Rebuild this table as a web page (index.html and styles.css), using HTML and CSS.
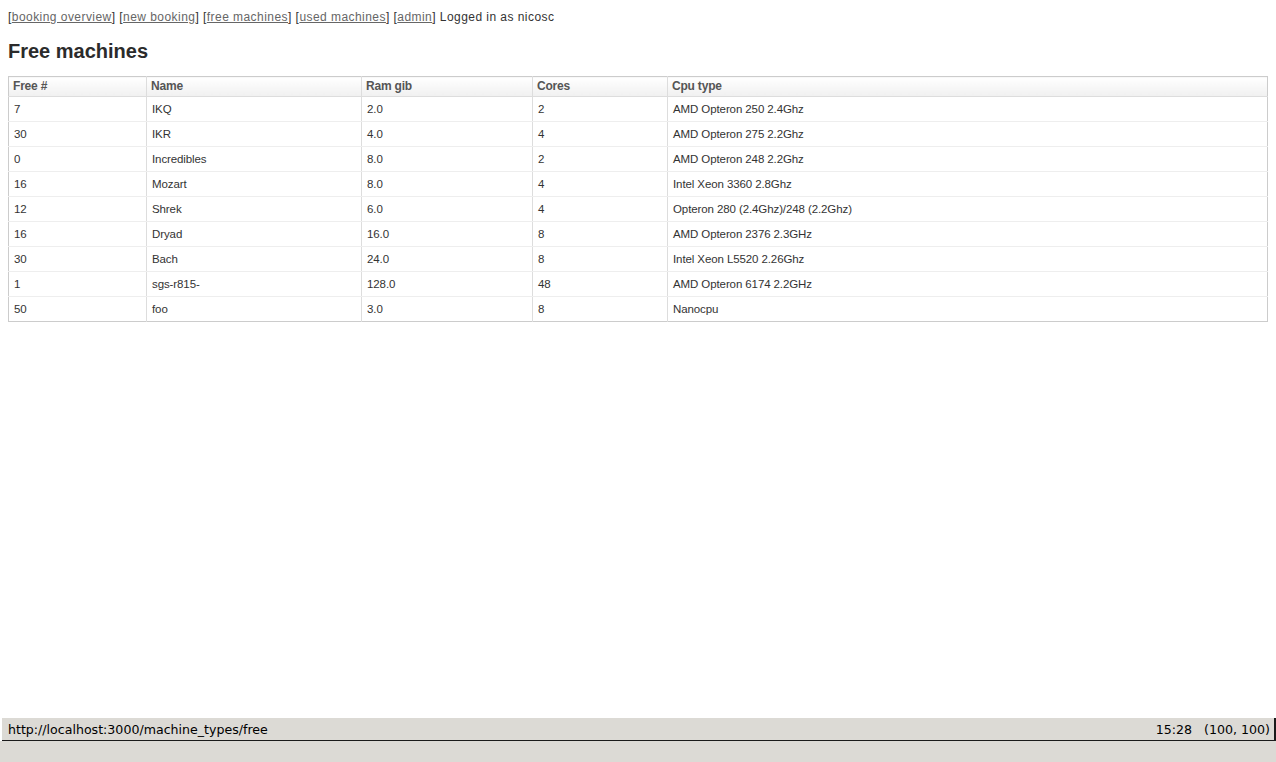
FILE: index.html
```html
<!DOCTYPE html>
<html>
<head>
<meta charset="utf-8">
<title>Free machines</title>
<link rel="stylesheet" href="styles.css">
</head>
<body>
<div class="page">
  <div class="content">
    <div class="nav">
      [<a href="#">booking overview</a>] [<a href="#">new booking</a>] [<a href="#">free machines</a>] [<a href="#">used machines</a>] [<a href="#">admin</a>] Logged in as nicosc
    </div>
    <h1 class="title">Free machines</h1>
    <table class="grid">
      <thead>
        <tr><th class="c1">Free #</th><th class="c2">Name</th><th class="c3">Ram gib</th><th class="c4">Cores</th><th>Cpu type</th></tr>
      </thead>
      <tbody>
        <tr><td>7</td><td>IKQ</td><td>2.0</td><td>2</td><td>AMD Opteron 250 2.4Ghz</td></tr>
        <tr><td>30</td><td>IKR</td><td>4.0</td><td>4</td><td>AMD Opteron 275 2.2Ghz</td></tr>
        <tr><td>0</td><td>Incredibles</td><td>8.0</td><td>2</td><td>AMD Opteron 248 2.2Ghz</td></tr>
        <tr><td>16</td><td>Mozart</td><td>8.0</td><td>4</td><td>Intel Xeon 3360 2.8Ghz</td></tr>
        <tr><td>12</td><td>Shrek</td><td>6.0</td><td>4</td><td>Opteron 280 (2.4Ghz)/248 (2.2Ghz)</td></tr>
        <tr><td>16</td><td>Dryad</td><td>16.0</td><td>8</td><td>AMD Opteron 2376 2.3GHz</td></tr>
        <tr><td>30</td><td>Bach</td><td>24.0</td><td>8</td><td>Intel Xeon L5520 2.26Ghz</td></tr>
        <tr><td>1</td><td>sgs-r815-</td><td>128.0</td><td>48</td><td>AMD Opteron 6174 2.2GHz</td></tr>
        <tr><td>50</td><td>foo</td><td>3.0</td><td>8</td><td>Nanocpu</td></tr>
      </tbody>
    </table>
  </div>
  <div class="statusbar">
    <span class="url">http://localhost:3000/machine_types/free</span>
    <span class="info">15:28 &nbsp;&nbsp;(100, 100)</span>
  </div>
  <div class="chrome"></div>
</div>
</body>
</html>
```

FILE: styles.css
```css
html, body {
  margin: 0;
  padding: 0;
  background: #ffffff;
}
.page {
  height: 762px;
  display: flex;
  flex-direction: column;
  overflow: hidden;
}
.content {
  flex: 1;
  padding: 10px 8px 0 8px;
  font-family: "Liberation Sans", Arial, sans-serif;
  font-size: 12px;
  color: #333333;
}
.nav {
  line-height: 15px;
  height: 15px;
  letter-spacing: 0.45px;
}
.nav a {
  color: #666666;
  text-decoration: underline;
}
.title {
  font-size: 20px;
  font-weight: bold;
  color: #2b2b2b;
  margin: 14px 0 0 0;
  line-height: 24px;
  height: 24px;
}
.grid {
  margin-top: 13px;
  width: 1260px;
  border-collapse: collapse;
  border: 1px solid #cccccc;
}
.grid th {
  text-align: left;
  font-weight: bold;
  font-size: 12px;
  letter-spacing: -0.2px;
  color: #555555;
  height: 18px;
  line-height: 14px;
  padding: 0 4px 1px 4px;
  background: linear-gradient(#ffffff, #f0f0f0);
  border-left: 1px solid #dddddd;
  border-bottom: 1px solid #dddddd;
  vertical-align: middle;
}
.grid td {
  height: 24px;
  padding: 0 5px;
  font-size: 11.5px;
  letter-spacing: -0.1px;
  border-left: 1px solid #dddddd;
  border-bottom: 1px solid #eeeeee;
  vertical-align: middle;
  color: #333333;
}
.grid tr > *:first-child {
  border-left: none;
}
.grid tbody tr:last-child td {
  border-bottom: none;
}
.c1 { width: 129px; }
.c2 { width: 206px; }
.c3 { width: 162px; }
.c4 { width: 126px; }
.statusbar {
  margin-left: 2px;
  height: 22px;
  background: #dcdad5;
  border-right: 2px solid #1a1a1a;
  border-bottom: 1px solid #1a1a1a;
  display: flex;
  align-items: center;
  justify-content: space-between;
  padding: 0 4px 0 6px;
  font-family: "DejaVu Sans", sans-serif;
  font-size: 12.6px;
  color: #000000;
}
.chrome {
  height: 21px;
  background: #dcdad5;
}
```
